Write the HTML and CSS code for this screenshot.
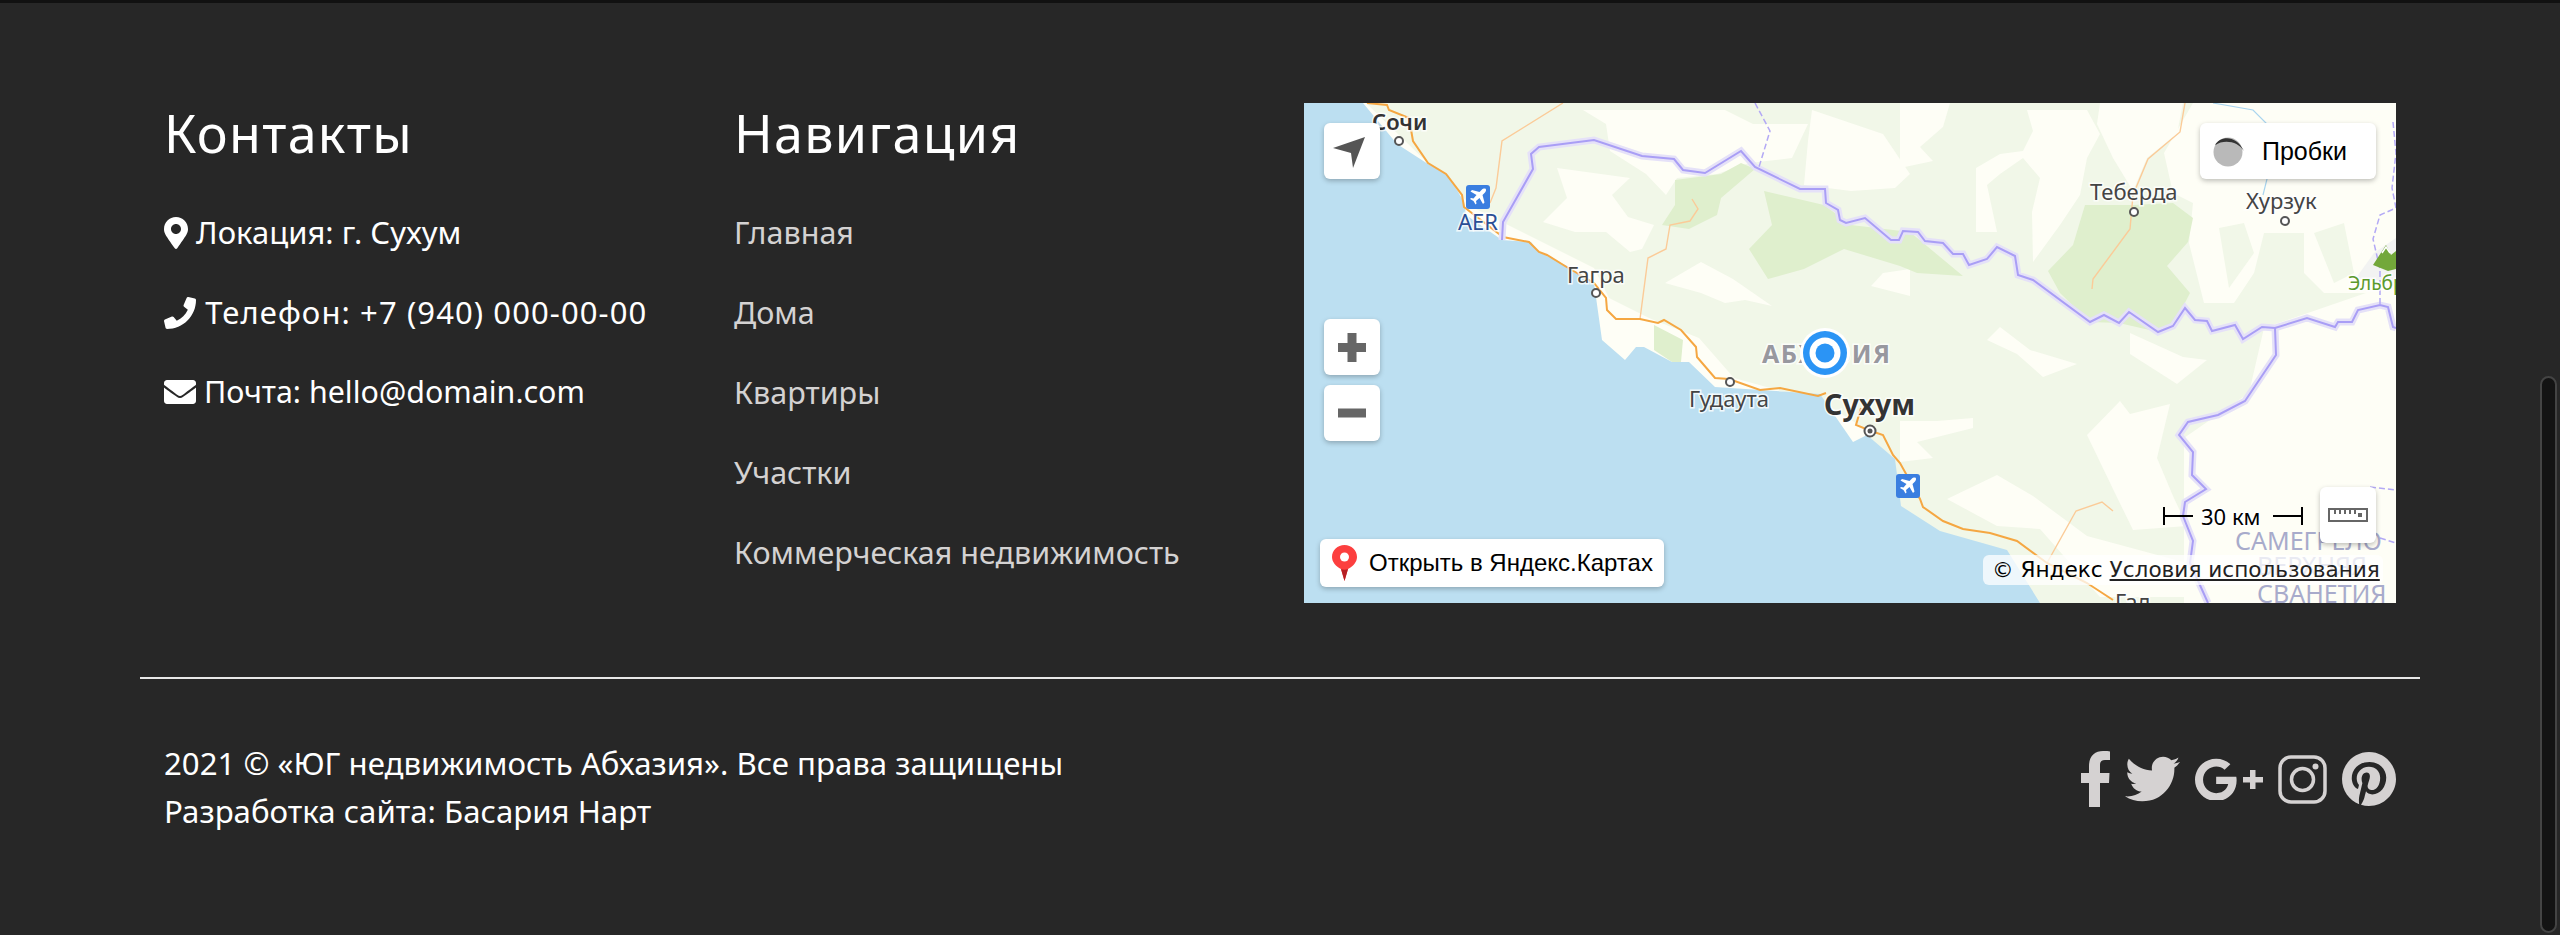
FILE: index.html
```html
<!DOCTYPE html>
<html lang="ru">
<head>
    <meta charset="UTF-8">
    <meta name="viewport" content="width=device-width, initial-scale=1.0">
    <title>ЮГ недвижимость Абхазия</title>
    <link rel="stylesheet" href="styles.css">
</head>
<body>

<footer class="footer">
    <div class="container">
        <div class="footer-top">
            <div class="col">
                <h2>Контакты</h2>
                <ul class="contact-list">
                    <li>
                        <svg class="ico ico-pin" viewBox="0 0 384 512"><path d="M172.268 501.67C26.97 291.031 0 262.901 0 192 0 85.961 85.961 0 192 0s192 85.961 192 192c0 70.901-26.97 99.031-172.268 309.67-9.535 13.774-29.93 13.773-39.464 0zM192 272c44.183 0 80-35.817 80-80s-35.817-80-80-80-80 35.817-80 80 35.817 80 80 80z"/></svg>
                        Локация: г. Сухум
                    </li>
                    <li class="phone">
                        <svg class="ico" viewBox="0 0 512 512"><path d="M493.4 24.6l-104-24c-11.3-2.6-22.9 3.3-27.5 13.9l-48 112c-4.2 9.8-1.4 21.3 6.9 28l60.6 49.6c-36 76.7-98.9 140.5-177.2 177.2l-49.6-60.6c-6.8-8.3-18.2-11.1-28-6.9l-112 48C3.9 366.5-2 378.1.6 389.4l24 104C27.1 504.2 36.7 512 48 512c256.1 0 464-207.5 464-464 0-11.2-7.7-20.9-18.6-23.4z"/></svg>
                        Телефон: +7 (940) 000-00-00
                    </li>
                    <li class="mail">
                        <svg class="ico" viewBox="0 64 512 384"><path d="M502.3 190.8c3.9-3.1 9.7-.2 9.7 4.7V400c0 26.5-21.5 48-48 48H48c-26.5 0-48-21.5-48-48V195.6c0-5 5.7-7.8 9.7-4.7 22.4 17.4 52.1 39.5 154.1 113.6 21.1 15.4 56.7 47.8 92.2 47.6 35.7.3 72-32.8 92.3-47.6 102-74.1 131.6-96.3 154-113.7zM256 320c23.2.4 56.6-29.2 73.4-41.4 132.7-96.3 142.8-104.7 173.4-128.7 5.8-4.5 9.2-11.5 9.2-18.9v-19c0-26.5-21.5-48-48-48H48C21.5 64 0 85.5 0 112v19c0 7.4 3.4 14.3 9.2 18.9 30.6 23.9 40.7 32.4 173.4 128.7 16.8 12.2 50.2 41.8 73.4 41.4z"/></svg>
                        Почта: hello@domain.com
                    </li>
                </ul>
            </div>
            <div class="col">
                <h2>Навигация</h2>
                <ul class="nav-list">
                    <li><a href="#">Главная</a></li>
                    <li><a href="#">Дома</a></li>
                    <li><a href="#">Квартиры</a></li>
                    <li><a href="#">Участки</a></li>
                    <li><a href="#">Коммерческая недвижимость</a></li>
                </ul>
            </div>
            <div class="col">
                <div class="map">
                    <svg class="map-canvas" viewBox="0 0 1092 500">
                        <rect class="land" width="1092" height="500"/>
                        <!-- зелень -->
                        <polygon class="green" points="62,0 1060,0 1062,190 960,225 945,290 880,335 880,500 640,500 600,420 560,325 520,300 430,275 395,235 345,215 305,195 290,165 170,105"/>
                        <g class="land">
                            <polygon points="253,65 326,75 308,92 324,114 350,122 338,146 326,149 302,129 271,129 239,119 263,95"/>
                            <polygon points="279,7 421,7 449,21 504,21 488,55 445,60 413,71 373,75 362,92 342,71 306,48 302,21"/>
                            <polygon points="508,7 579,31 606,71 591,85 547,88 500,82 504,38"/>
                            <polygon points="361,180 397,159 429,176 468,203 441,197 421,200 397,190"/>
                            <polygon points="579,170 606,166 606,193 567,183"/>
                            <polygon points="596,0 646,0 639,24 616,44 629,58 596,65"/>
                            <polygon points="672,65 696,51 719,48 729,28 723,7 783,7 796,31 783,55 776,92 756,122 729,159 728,109 736,75 719,55 696,71 683,82 693,129 672,129"/>
                            <polygon points="796,0 879,0 873,31 843,55 829,88 809,55 793,21"/>
                            <polygon points="889,0 1092,0 1092,130 1070,190 1020,190 1000,170 1000,130 960,130 950,170 930,200 900,200 885,140 889,100 869,90 860,50"/>
                            <polygon points="783,332 816,298 826,311 866,301 853,355 869,393 883,423 829,427 809,386"/>
                            <polygon points="596,318 633,318 669,315 669,325 613,339 629,355 596,359"/>
                            <polygon points="643,396 693,372 729,393 783,433 883,460 903,494 796,494 736,426 693,423"/>
                            <polygon points="683,237 696,224 726,247 773,261 739,274 713,251"/>
                            <polygon points="826,230 879,254 903,257 873,281 826,251"/>
                        </g>
                        <polygon class="green" points="915,125 940,120 950,150 925,185"/>
                        <polygon class="green" points="1010,130 1040,120 1050,170 1030,180"/>
                        <polygon class="green-dark" points="781,102 769,142 744,168 756,190 786,219 815,220 854,229 869,223 886,190 863,163 884,139 889,115 869,100 829,102"/>
                        <polygon class="green-dark" points="371,77 417,71 437,60 451,66 417,95 413,112 385,126 358,122 371,102"/>
                        <polygon class="green-dark" points="460,88 520,102 547,122 606,129 659,173 613,170 596,163 540,146 500,166 464,176 445,146 468,122"/>
                        <polygon class="green-dark" points="350,222 379,237 377,259 368,259 350,247"/>
                        <polygon class="gray-patch" points="1092,135 1070,150 1052,175 1092,180"/>
                        <!-- море -->
                        <polygon class="water" points="0,0 59,0 93,41 124,61 144,72 160,99 162,112 198,137 227,139 235,149 263,163 290,180 298,237 321,257 332,244 340,244 368,259 385,259 411,284 472,288 516,291 549,339 563,332 591,356 597,403 636,428 703,447 736,500 0,500"/>
                        <!-- дороги -->
                        <polyline class="road-thin" points="259,0 198,38 192,85 186,100"/>
                        <polyline class="road-thin" points="388,96 394,106 386,118 366,122 362,146 344,155 336,216"/>
                        <polyline class="road-thin" points="881,0 876,29 844,56 829,92 826,126 789,176 788,186"/>
                        <polyline class="road-thin" points="743,460 772,408 798,399 809,408"/>
                        <polyline class="river" points="909,0 949,7 963,21 963,76 959,92"/>
                        <polyline class="road" points="63,0 83,2 85,7 105,15 109,38 124,60 142,71 158,92 160,104 199,134 225,139 235,149 243,152 261,163 290,180 302,195 303,207 312,216 336,216 354,220 360,217 377,227 392,244 393,254 411,275 425,276 456,287 476,285 514,293 522,290"/>
                        <polyline class="road" points="557,305 552,322 567,328 579,332 589,352 596,360 616,396 619,404 639,418 659,426 686,430 713,438 743,460 783,480 809,497"/>
                        <!-- границы -->
                        <defs>
                            <polyline id="border-main" points="198,137 199,119 229,66 227,51 235,44 290,37 338,53 370,56 379,67 401,70 437,48 451,64 496,86 521,86 522,100 534,107 536,117 542,120 561,115 587,137 595,137 599,128 614,129 621,138 639,140 649,151 659,151 665,162 683,156 693,144 711,153 714,172 729,177 786,219 800,212 815,220 825,209 854,229 869,223 881,205 891,217 903,218 908,228 931,222 939,236 958,224 971,225 1003,215 1031,224 1034,219 1048,219 1054,207 1076,202 1084,204 1089,224 1092,225"/>
                            <polyline id="border-south" points="971,225 972,252 941,298 914,312 884,319 875,332 889,349 888,372 902,386 881,399 879,413 889,438 886,460 904,500"/>
                        </defs>
                        <g class="border-halo"><use href="#border-main"/><use href="#border-south"/></g>
                        <g class="border"><use href="#border-main"/><use href="#border-south"/></g>
                        <polyline class="border-dash" points="451,0 466,28 455,64"/>
                        <polyline class="border-dash" points="1089,19 1092,50 1088,85 1092,105 1076,112 1069,136 1076,166 1076,202"/>
                        <polyline class="border-dash" points="1066,384 1092,387"/>
                        <polyline class="border-dash" points="1076,435 1092,440"/>
                        <!-- Эльбрус -->
                        <polygon class="peak" points="1069,162 1082,142 1087,152 1092,148 1092,166 1084,168"/>
                        <polyline class="peak-snow" points="1078,150 1082,144 1086,150"/>
                        <!-- аэропорты -->
                        <g transform="translate(162 82)">
                            <rect class="airport" width="24" height="24" rx="3"/>
                            <path class="plane" d="M20 4c-1-1-3-.5-4 .5l-2.500 2.500-7.500-2-1.500 1.500 6 3.500-3 3.500-2.500-.5-1 1 3.500 2 2 3.500 1-1-.5-2.500 3.500-3 3.500 6 1.500-1.500-2-7.500 2.500-2.500c1-1 1.500-3 .5-4z"/>
                        </g>
                        <g transform="translate(592 371)">
                            <rect class="airport" width="24" height="24" rx="3"/>
                            <path class="plane" d="M20 4c-1-1-3-.5-4 .5l-2.500 2.500-7.500-2-1.500 1.500 6 3.500-3 3.500-2.500-.5-1 1 3.500 2 2 3.500 1-1-.5-2.500 3.500-3 3.500 6 1.500-1.500-2-7.500 2.500-2.500c1-1 1.500-3 .5-4z"/>
                        </g>
                        <!-- точки городов -->
                        <circle class="city" cx="95" cy="38" r="4"/>
                        <circle class="city" cx="292" cy="190" r="4"/>
                        <circle class="city" cx="426" cy="279" r="4"/>
                        <circle class="city" cx="830" cy="109" r="4"/>
                        <circle class="city" cx="981" cy="118" r="4"/>
                        <circle class="city" cx="566" cy="328" r="5.500"/>
                        <circle class="city-dot" cx="566" cy="328" r="2.500"/>
                        <!-- подписи -->
                        <text class="lbl lbl-semi" x="68" y="27">Сочи</text>
                        <text class="lbl lbl-air" x="154" y="127">AER</text>
                        <text class="lbl" x="263" y="180">Гагра</text>
                        <text class="lbl" x="385" y="304">Гудаута</text>
                        <text class="lbl" x="786" y="97">Теберда</text>
                        <text class="lbl" x="942" y="106">Хурзук</text>
                        <text class="lbl lbl-peak" x="1044" y="187">Эльбрус</text>
                        <text class="lbl lbl-region" x="458" y="260">АБХАЗИЯ</text>
                        <text class="lbl lbl-big" x="520" y="312">Сухум</text>
                        <text class="lbl lbl-area" x="931" y="447">САМЕГРЕЛО</text>
                        <text class="lbl lbl-area" x="953" y="472">ВЕРХНЯЯ</text>
                        <text class="lbl lbl-area" x="953" y="500">СВАНЕТИЯ</text>
                        <text class="lbl" x="811" y="507">Гал</text>
                        <!-- метка -->
                        <circle class="pin-halo" cx="521" cy="250" r="25"/>
                        <circle class="pin-ring" cx="521" cy="250" r="22"/>
                        <circle class="pin-halo" cx="521" cy="250" r="15.500"/>
                        <circle class="pin-ring" cx="521" cy="250" r="9.500"/>
                        <!-- масштаб -->
                        <polyline class="scale-line" points="860,404 860,422 860,413 889,413"/>
                        <polyline class="scale-line" points="969,413 998,413 998,404 998,422"/>
                        <text class="scale-text" x="897" y="422">30 км</text>
                    </svg>

                    <button class="map-btn btn-nav">
                        <svg viewBox="0 0 56 56"><polygon points="9,25 41,14 29,45 27,30"/></svg>
                    </button>
                    <button class="map-btn btn-plus">
                        <svg viewBox="0 0 56 56"><path d="M14 24h9.500v-10h9v10h9.500v9h-9.500v10h-9v-10h-9.500z"/></svg>
                    </button>
                    <button class="map-btn btn-minus">
                        <svg viewBox="0 0 56 56"><rect x="14" y="23.500" width="28" height="9"/></svg>
                    </button>
                    <button class="map-btn btn-traffic">
                        <svg viewBox="0 0 32 32"><circle class="tr-fill" cx="16" cy="17" r="14.500"/><path class="tr-arc" d="M3 10C8 1 24 -1 32 16 26 6 12 4 3 10z"/></svg>
                        <span>Пробки</span>
                    </button>
                    <button class="map-btn btn-ruler">
                        <svg viewBox="0 0 40 14"><rect class="ruler" x="1" y="1" width="38" height="12"/><path class="ruler-ticks" d="M7 2v4M12 2v4M17 2v4M22 2v4M27 2v4"/><rect class="ruler-dot" x="30" y="5" width="4" height="4"/></svg>
                    </button>
                    <a class="map-open" href="#">
                        <svg viewBox="0 0 25 36"><path class="pin-red" d="M12.500 0C5.600 0 0 5.400 0 12c0 5 4 9.500 9 12l3.500 12 3.500-12c5-2.500 9-7 9-12C25 5.400 19.400 0 12.500 0z"/><path class="pin-tail" d="M9 24c2 1 5 1 7 0l-3.500 12z"/><circle class="pin-hole" cx="12.500" cy="12" r="4.500"/></svg>
                        <span>Открыть в Яндекс.Картах</span>
                    </a>
                    <div class="map-copy">© Яндекс <a href="#">Условия использования</a></div>
                </div>
            </div>
        </div>

        <hr class="divider">

        <div class="footer-bottom">
            <p class="copy">2021 © «ЮГ недвижимость Абхазия». Все права защищены<br>Разработка сайта: Басария Нарт</p>
            <div class="social">
                <a href="#"><svg class="s-fb" viewBox="0 0 29 56"><path d="M8 56V32H0V22h8v-7C8 5 14 0 22 0c3 0 6 .2 7 .4V9h-5c-3.500 0-5 1.600-5 5v8h9.500L28 32h-9v24z"/></svg></a>
                <a href="#"><svg class="s-tw" viewBox="0 48 512 416"><path d="M459.37 151.716c.325 4.548.325 9.097.325 13.645 0 138.72-105.583 298.558-298.558 298.558-59.452 0-114.68-17.219-161.137-47.106 8.447.974 16.568 1.299 25.34 1.299 49.055 0 94.213-16.568 130.274-44.832-46.132-.975-84.792-31.188-98.112-72.772 6.498.974 12.995 1.624 19.818 1.624 9.421 0 18.843-1.3 27.614-3.573-48.081-9.747-84.143-51.98-84.143-102.985v-1.299c13.969 7.797 30.214 12.67 47.431 13.319-28.264-18.843-46.781-51.005-46.781-87.391 0-19.492 5.197-37.36 14.294-52.954 51.655 63.675 129.3 105.258 216.365 109.807-1.624-7.797-2.599-15.918-2.599-24.04 0-57.828 46.782-104.934 104.934-104.934 30.213 0 57.502 12.67 76.67 33.137 23.715-4.548 46.456-13.32 66.599-25.34-7.798 24.366-24.366 44.833-46.132 57.827 21.117-2.273 41.584-8.122 60.426-16.243-14.292 20.791-32.161 39.308-52.628 54.253z"/></svg></a>
                <a href="#"><svg class="s-gp" viewBox="0 0 68 42"><g transform="scale(0.0853)"><path d="M488 261.800C488 403.300 391.100 504 248 504 110.800 504 0 393.200 0 256S110.800 8 248 8c66.800 0 123 24.500 166.300 64.900l-67.500 64.900C258.500 52.600 94.300 116.600 94.300 256c0 86.500 69.100 156.600 153.700 156.600 98.200 0 135-70.400 140.800-106.900H248v-85.300h236.100c2.300 12.700 3.900 24.900 3.900 41.400z"/></g><path d="M55 12h5.500v7H68v5.500h-7.500V31H55v-6.500h-7V19h7z"/></svg></a>
                <a href="#"><svg class="s-ig" viewBox="0 0 49 49"><rect class="ig-line" x="2" y="2" width="45" height="45" rx="11"/><circle class="ig-line" cx="24.500" cy="24.500" r="11"/><circle cx="37.500" cy="11.500" r="3"/></svg></a>
                <a href="#"><svg class="s-pt" viewBox="0 8 496 496"><path d="M496 256c0 137-111 248-248 248-25.600 0-50.200-3.900-73.400-11.100 10.100-16.500 25.200-43.500 30.800-65 3-11.600 15.400-59 15.400-59 8.100 15.400 31.700 28.500 56.800 28.500 74.800 0 128.700-68.800 128.700-154.300 0-81.900-66.900-143.200-152.900-143.200-107 0-163.900 71.800-163.900 150.100 0 36.400 19.400 81.700 50.300 96.100 4.700 2.200 7.200 1.200 8.300-3.300.8-3.400 5-20.300 6.900-28.100.6-2.500.3-4.700-1.700-7.100-10.100-12.500-18.300-35.300-18.300-56.600 0-54.700 41.400-107.600 112-107.600 60.900 0 103.600 41.500 103.600 100.900 0 67.100-33.900 113.600-78 113.600-24.300 0-42.600-20.100-36.700-44.800 7-29.500 20.500-61.300 20.500-82.600 0-19-10.200-34.900-31.400-34.900-24.900 0-44.900 25.700-44.900 60.200 0 22 7.400 36.800 7.400 36.800s-24.500 103.800-29 123.200c-5 21.400-3 51.600-.9 71.200C65.400 450.900 0 361.100 0 256 0 119 111 8 248 8s248 111 248 248z"/></svg></a>
            </div>
        </div>
    </div>
</footer>

<div class="scroll-thumb"></div>

</body>
</html>
```

FILE: styles.css
```css
* {
    box-sizing: border-box;
}

html, body {
    margin: 0;
    height: 100%;
    overflow: hidden;
}

body {
    background-color: #272727;
    font-family: "Noto Sans", "Open Sans", sans-serif;
    color: #fff;
}

.footer {
    border-top: 3px solid #111;
    padding-top: 100px;
}

.container {
    width: 2280px;
    margin: 0 auto;
}

.footer-top {
    display: grid;
    grid-template-columns: 570px 570px 1140px;
}

.col {
    padding: 0 24px;
}

h2 {
    font-size: 52px;
    font-weight: 400;
    letter-spacing: 1.3px;
    line-height: 60px;
    margin: 0 0 45px;
}

ul {
    list-style: none;
    margin: 0;
    padding: 0;
}

li {
    font-size: 31px;
    line-height: 48px;
    margin-bottom: 32px;
}

li:last-child {
    margin-bottom: 0;
}

.phone {
    letter-spacing: 1.1px;
}

.mail {
    font-size: 30.4px;
}

.nav-list li {
    font-size: 30.5px;
}

.nav-list a {
    color: #d4d2d2;
    text-decoration: none;
}

.ico {
    width: 32px;
    height: 32px;
    fill: #fff;
    vertical-align: -5px;
}

.ico-pin {
    width: 24px;
}

/* карта */
.map {
    position: relative;
    width: 1092px;
    height: 500px;
    overflow: hidden;
}

.map-canvas {
    display: block;
    width: 1092px;
    height: 500px;
    font-family: "Noto Sans", sans-serif;
}

.land { fill: #fefef6; }
.green { fill: #f1f7e8; }
.green-dark { fill: #dfefcd; }
.gray-patch { fill: #f2f3f2; }
.water { fill: #bcdff1; }

.road, .road-thin, .river, .border, .border-halo, .border-dash, .scale-line, .peak-snow {
    fill: none;
}

.road { stroke: #f5a742; stroke-width: 2; }
.road-thin { stroke: #fbcb98; stroke-width: 1.4; }
.river { stroke: #a9d5ef; stroke-width: 1.2; }

.border {
    stroke: #a99ef5;
    stroke-width: 2;
}

.border-halo {
    stroke: #e5e1f8;
    stroke-width: 7;
}

.border-dash {
    stroke: #b3a9f5;
    stroke-width: 1.5;
    stroke-dasharray: 6 3;
}

.peak { fill: #73a83a; }
.peak-snow { stroke: #fff; stroke-width: 1.5; }
.airport { fill: #3a7ee0; }
.plane { fill: #fff; }

.city {
    fill: #fff;
    stroke: #555;
    stroke-width: 2;
}

.city-dot { fill: #555; }

.lbl {
    font-size: 22px;
    fill: #444;
    stroke: #fff;
    stroke-width: 3px;
    stroke-opacity: 0.8;
    paint-order: stroke;
}

.lbl-semi { font-weight: 600; fill: #333; }
.lbl-air { fill: #2a4f95; }
.lbl-peak { fill: #5b9a2c; font-size: 19px; }
.lbl-region { font-size: 25px; font-weight: 700; fill: #98989f; letter-spacing: 1.5px; }
.lbl-big { font-size: 28.5px; font-weight: 700; fill: #333; }
.lbl-area { font-size: 25px; fill: #a8abcb; stroke: none; }

.pin-halo { fill: #fff; }
.pin-ring { fill: #2b94f5; }

.scale-line {
    stroke: #000;
    stroke-width: 2;
}

.scale-text {
    font-size: 22px;
    fill: #000;
    stroke: #fff;
    stroke-width: 3px;
    paint-order: stroke;
}

.map-btn {
    position: absolute;
    display: flex;
    align-items: center;
    width: 56px;
    height: 56px;
    padding: 0;
    border: 0;
    border-radius: 6px;
    background: #fff;
    box-shadow: 0 2px 5px rgba(0, 0, 0, 0.25);
}

.map-btn svg {
    display: block;
    width: 56px;
    height: 56px;
    fill: #666;
}

.btn-nav { left: 20px; top: 20px; }
.btn-nav svg { fill: #555; }
.btn-plus { left: 20px; top: 216px; }
.btn-minus { left: 20px; top: 282px; }

.btn-traffic {
    left: 896px;
    top: 20px;
    width: 176px;
    padding-left: 12px;
    gap: 18px;
    font-family: "Liberation Sans", Arial, sans-serif;
    font-size: 25px;
    color: #000;
}

.btn-traffic svg {
    width: 32px;
    height: 32px;
}

.tr-fill { fill: #b9b9b9; }
.tr-arc { fill: #333; }

.btn-ruler { left: 1016px; top: 384px; }

.btn-ruler svg {
    width: 40px;
    height: 14px;
    margin-left: 8px;
}

.ruler, .ruler-ticks {
    fill: none;
    stroke: #666;
    stroke-width: 2;
}

.ruler-dot { fill: #666; }

.map-open {
    position: absolute;
    left: 16px;
    top: 436px;
    display: flex;
    align-items: center;
    width: 344px;
    height: 48px;
    padding-left: 12px;
    gap: 12px;
    border-radius: 6px;
    background: #fff;
    box-shadow: 0 2px 5px rgba(0, 0, 0, 0.25);
    font-family: "Liberation Sans", Arial, sans-serif;
    font-size: 24px;
    color: #000;
    text-decoration: none;
}

.map-open svg {
    width: 25px;
    height: 36px;
}

.pin-red { fill: #fc3f3f; }
.pin-tail { fill: #b51f24; }
.pin-hole { fill: #fff; }

.map-copy {
    position: absolute;
    left: 679px;
    top: 452px;
    height: 30px;
    padding: 0 0 0 9px;
    width: 400px;
    border-radius: 6px;
    background: rgba(255, 255, 255, 0.75);
    font-family: "DejaVu Sans", sans-serif;
    font-size: 21.6px;
    line-height: 30px;
    white-space: nowrap;
    color: #000;
}

.map-copy a {
    color: #222;
}

/* низ */
.divider {
    margin: 74px 0 0;
    border: 0;
    border-top: 2px solid #e8e8e8;
}

.footer-bottom {
    display: flex;
    justify-content: space-between;
    align-items: flex-start;
    padding: 60px 24px 0;
}

.copy {
    margin: 0;
    font-size: 31.2px;
    line-height: 48px;
}

.social {
    display: flex;
    align-items: center;
    gap: 15px;
    padding-top: 12px;
}

.social a {
    display: block;
}

.social svg {
    display: block;
    fill: #d5d2d2;
}

.s-fb { width: 29px; height: 56px; }
.s-tw { width: 55px; height: 46px; }
.s-gp { width: 68px; height: 42px; }
.s-ig { width: 49px; height: 49px; }
.s-pt { width: 54px; height: 54px; }

.ig-line {
    fill: none;
    stroke: #d5d2d2;
    stroke-width: 3.5;
}

.scroll-thumb {
    position: fixed;
    right: 3px;
    top: 376px;
    width: 17px;
    height: 557px;
    border: 2px solid #444;
    border-radius: 9px;
    background: #131313;
}
```
